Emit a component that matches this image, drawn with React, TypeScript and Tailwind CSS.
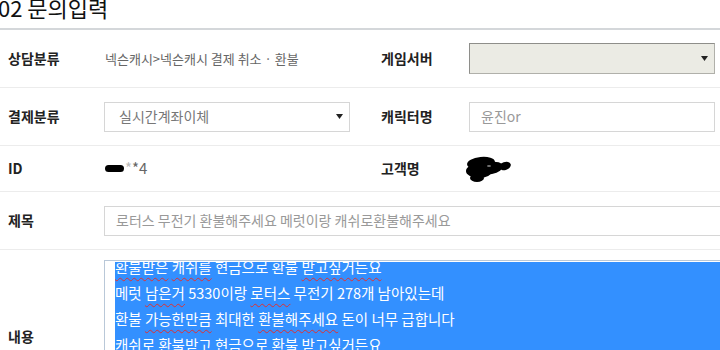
import React from "react"

const font = { fontFamily: '"Noto Sans CJK KR", "Noto Sans", sans-serif' }

function Arrow() {
  return (
    <svg width="7" height="5" viewBox="0 0 7 5" className="shrink-0">
      <path d="M0 0h7L3.5 5z" fill="#222" />
    </svg>
  )
}

function Wavy({ children }: { children: React.ReactNode }) {
  return (
    <span className="underline decoration-wavy decoration-[#e03030] decoration-1 underline-offset-[4px]">
      {children}
    </span>
  )
}

function Label({ children }: { children: React.ReactNode }) {
  return <div className="pl-2 text-[14px] font-bold text-[#222]">{children}</div>
}

function RightLabel({ children }: { children: React.ReactNode }) {
  return <div className="pl-[1px] text-[14px] font-bold text-[#222]">{children}</div>
}

export default function App() {
  return (
    <div className="h-[350px] w-[720px] overflow-hidden bg-white" style={font}>
      <div className="h-[30px] border-b-2 border-[#d4d7da]">
        <h2 className="-ml-[2px] -translate-y-[8px] text-[22px] leading-[30px] font-normal text-[#111]">
          02 문의입력
        </h2>
      </div>

      {/* row 1 */}
      <div className="grid h-[58px] grid-cols-[104px_276px_89px_251px] items-center border-b border-[#ececec]">
        <Label>상담분류</Label>
        <div className="pl-[1px] text-[13px] text-[#666]">넥슨캐시&gt;넥슨캐시 결제 취소 · 환불</div>
        <RightLabel>게임서버</RightLabel>
        <div className="flex h-[31px] w-[246px] items-center justify-end border border-[#b0b0aa] border-t-[#8e8e8a] border-l-[#8e8e8a] bg-[#ebebe4] pr-[6px]">
          <Arrow />
        </div>
      </div>

      {/* row 2 */}
      <div className="grid h-[58px] grid-cols-[104px_276px_89px_251px] items-center border-b border-[#ececec]">
        <Label>결제분류</Label>
        <div className="flex h-[30px] w-[246px] items-center justify-between border border-[#d6d6d6] pl-[14px] pr-[6px]">
          <span className="text-[14px] text-[#777]">실시간계좌이체</span>
          <Arrow />
        </div>
        <RightLabel>캐릭터명</RightLabel>
        <div className="flex h-[30px] w-[246px] items-center border border-[#d6d6d6] pl-[11px]">
          <span className="text-[14px] text-[#999]">윤진or</span>
        </div>
      </div>

      {/* row 3 */}
      <div className="grid h-[46px] grid-cols-[104px_276px_89px_251px] items-center border-b border-[#ececec]">
        <Label>ID</Label>
        <div className="flex items-center pl-[1px] text-[15px] text-[#666]">
          <span className="h-[7px] w-[19px] rounded-full bg-black blur-[0.6px]" />
          <span className="ml-[1px] text-[#bbb]">*</span>
          <span>*4</span>
        </div>
        <RightLabel>고객명</RightLabel>
        <div className="-ml-[8px]">
          <svg width="52" height="30" viewBox="0 0 52 30">
            <g fill="#000">
              <ellipse cx="20" cy="9" rx="14" ry="6" transform="rotate(-6 20 9)" />
              <ellipse cx="18" cy="17" rx="13" ry="7" />
              <ellipse cx="30" cy="14" rx="12" ry="6" transform="rotate(-10 30 14)" />
              <ellipse cx="44" cy="12" rx="6" ry="4" transform="rotate(-20 44 12)" />
              <ellipse cx="16" cy="24" rx="7" ry="4" />
            </g>
            <ellipse cx="28" cy="12" rx="2" ry="1" fill="#777" />
          </svg>
        </div>
      </div>

      {/* row 4 */}
      <div className="flex h-[58px] items-center border-b border-[#ececec]">
        <div className="w-[104px] shrink-0">
          <Label>제목</Label>
        </div>
        <div className="flex h-[30px] w-[640px] shrink-0 items-center border border-[#d6d6d6] pl-[11px]">
          <span className="text-[14px] text-[#999]">로터스 무전기 환불해주세요 메럿이랑 캐쉬로환불해주세요</span>
        </div>
      </div>

      {/* row 5 */}
      <div className="flex pt-[10px]">
        <div className="flex w-[104px] shrink-0 items-center pt-[32px]">
          <Label>내용</Label>
        </div>
        <div className="h-[120px] w-[640px] shrink-0 overflow-hidden border border-[#b9c8d8] pl-[10px] pt-[1px]">
          <div className="h-full overflow-hidden bg-[#3390ff]">
            <div className="-mt-[8px] text-[14.5px] leading-[26px] text-white">
              <div><Wavy>환불받은</Wavy> <Wavy>캐쉬를</Wavy> 현금으로 환불 <Wavy>받고싶거든요</Wavy></div>
              <div>메럿 <Wavy>남은거</Wavy> 5330이랑 <Wavy>로터스</Wavy> 무전기 278개 남아있는데</div>
              <div>환불 <Wavy>가능한만큼</Wavy> 최대한 <Wavy>환불해주세요</Wavy> 돈이 너무 급합니다</div>
              <div><Wavy>캐쉬로</Wavy> <Wavy>환불받고</Wavy> 현금으로 환불 <Wavy>받고싶거든요</Wavy></div>
            </div>
          </div>
        </div>
      </div>
    </div>
  )
}
